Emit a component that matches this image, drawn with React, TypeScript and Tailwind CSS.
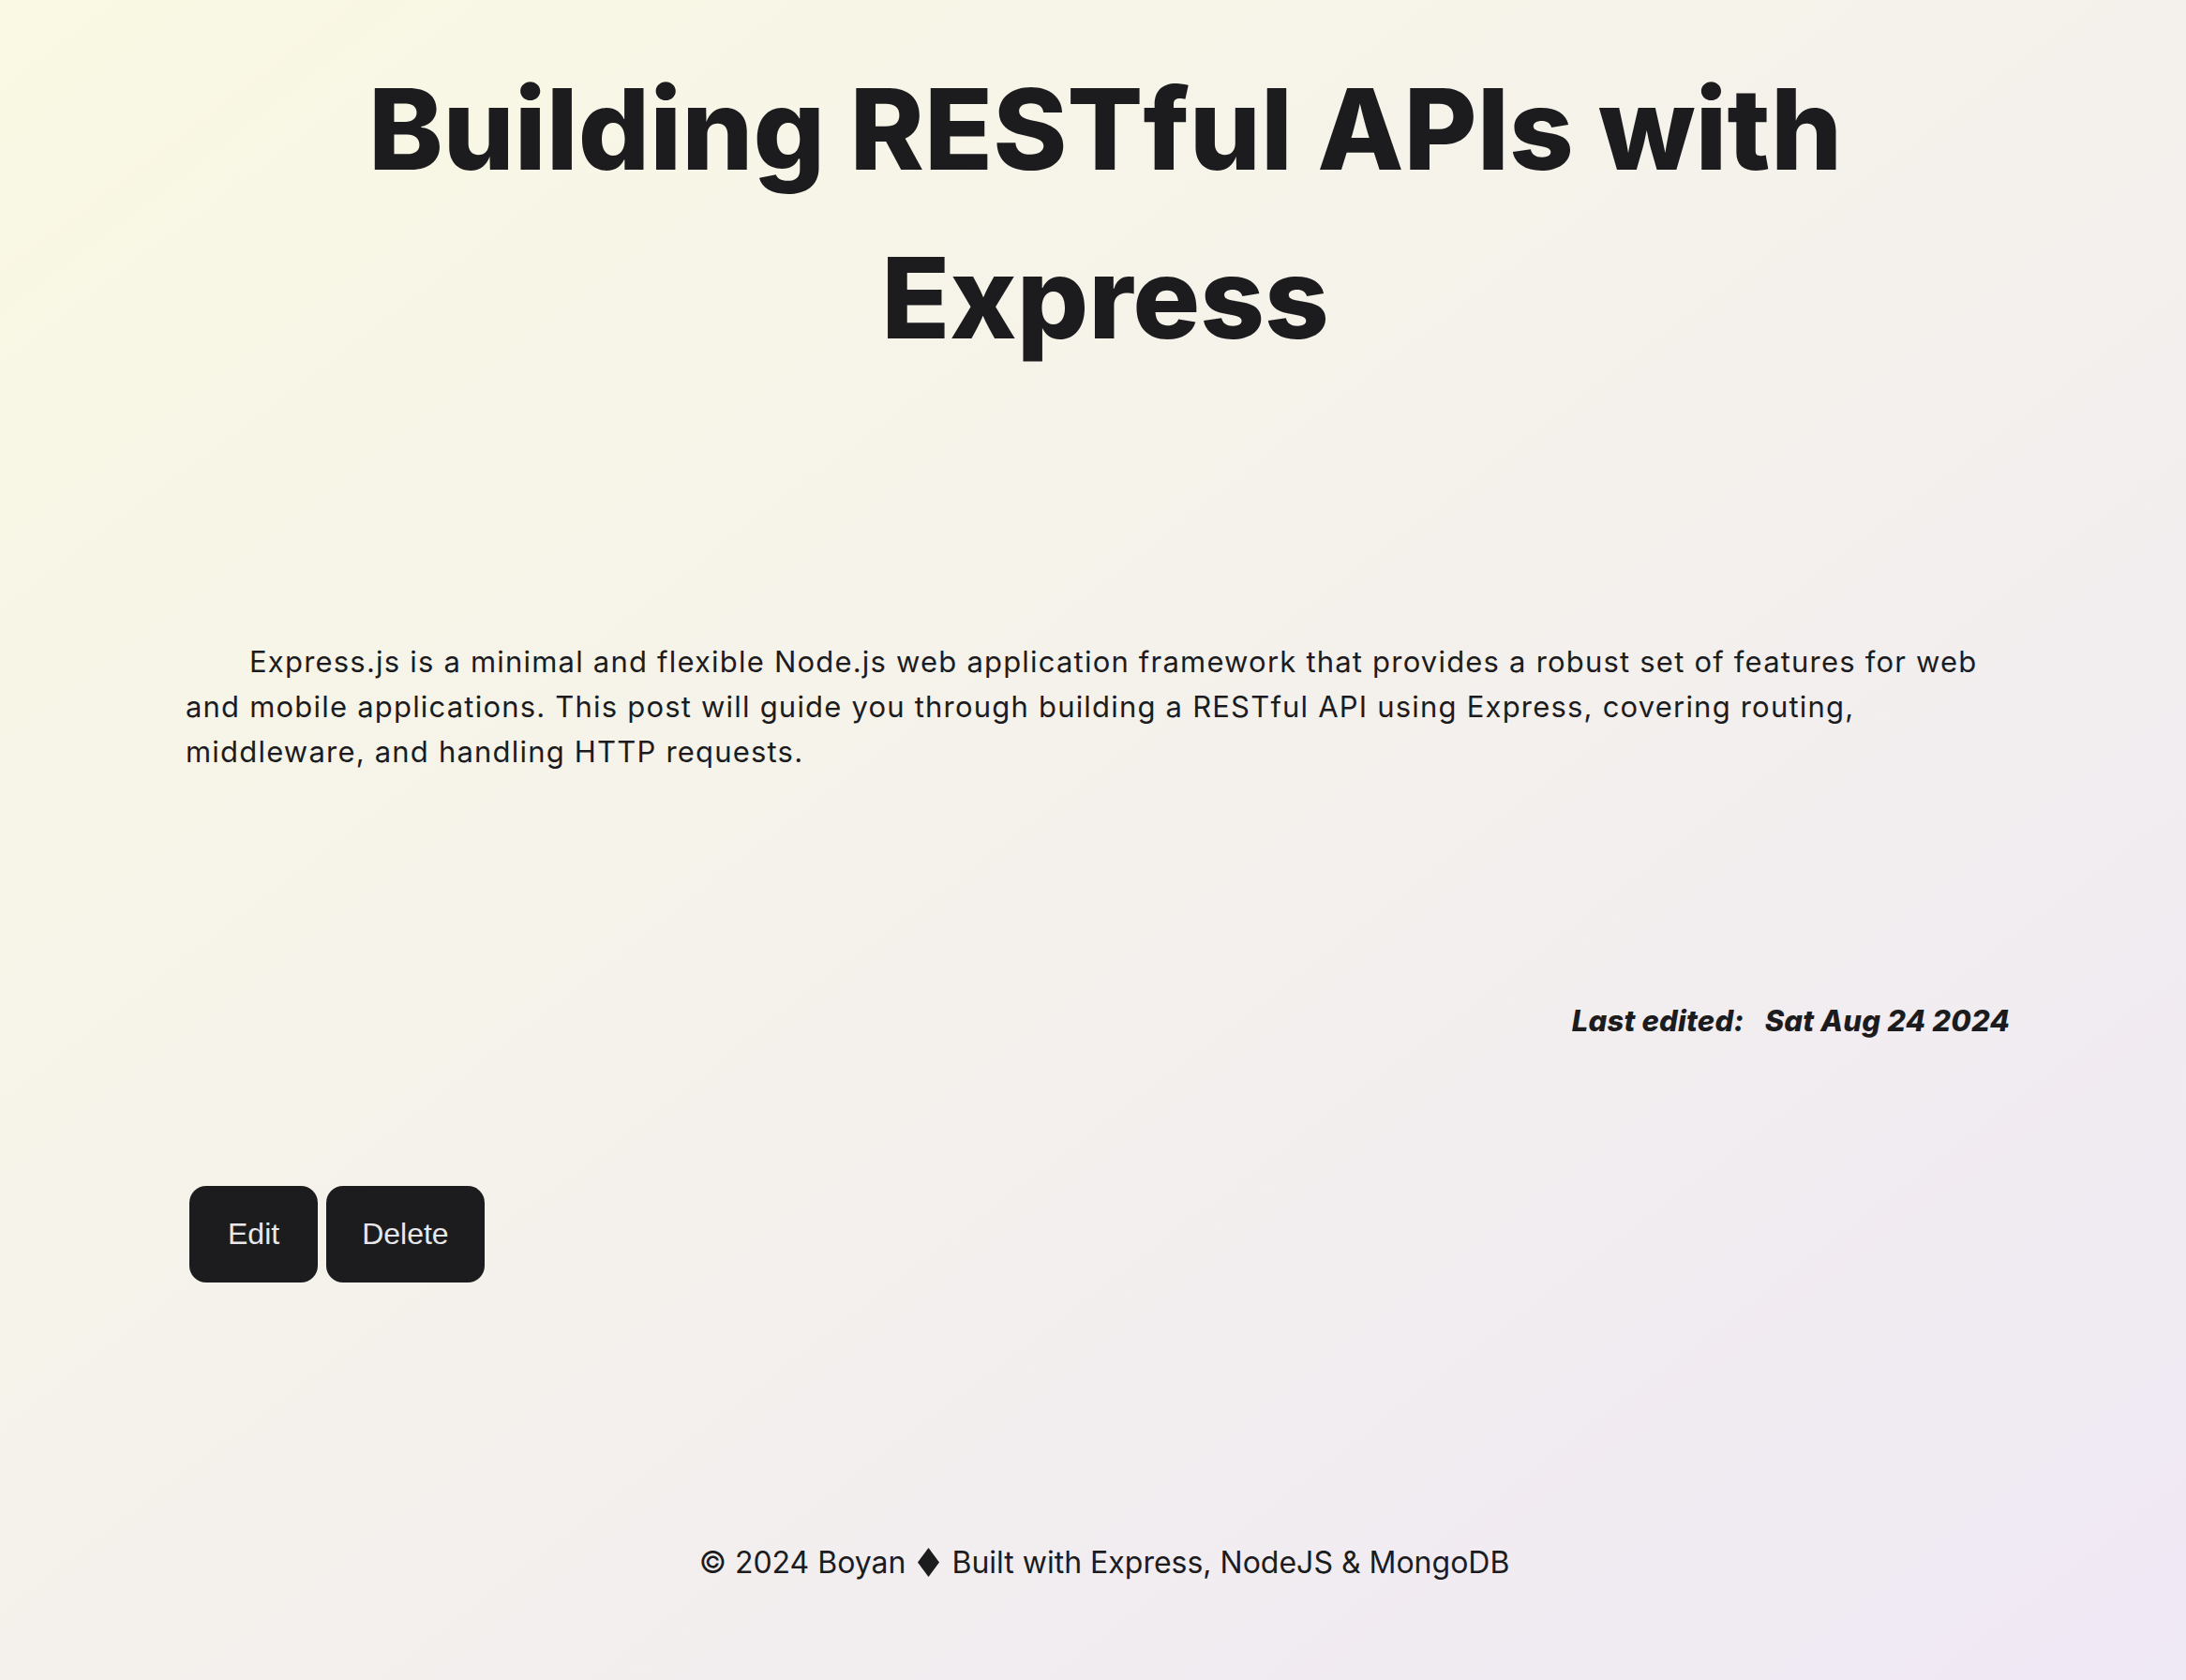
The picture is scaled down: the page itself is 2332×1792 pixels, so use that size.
const post = {
  title: 'Building RESTful APIs with Express',
  body:
    'Express.js is a minimal and flexible Node.js web application framework that provides a robust set of features for web and mobile applications. This post will guide you through building a RESTful API using Express, covering routing, middleware, and handling HTTP requests.',
  updatedAt: 'Sat Aug 24 2024',
};

const App = () => {
  return (
    <div
      className="min-h-screen bg-[linear-gradient(to_bottom_right,#faf9e3,#f4f1ec_50%,#efe8f5)] text-[#1c1c1e]"
      style={{ fontFamily: 'Inter, "Noto Sans", sans-serif' }}
    >
      <main className="ml-[198px] w-[1946px] pt-[48px]">
        <h1 className="mx-auto max-w-[1700px] pl-[16px] text-center text-[120px] font-extrabold leading-[180px]">
          {post.title}
        </h1>

        <p className="mt-[274px] indent-[68px] text-[31px] leading-[48px] tracking-[1.2px]">{post.body}</p>

        <p className="mt-[240px] text-right text-[31px] font-extrabold italic tracking-[0.2px]">
          Last edited:<span className="ml-[22px]">{post.updatedAt}</span>
        </p>

        <div className="mt-[152px] flex gap-[9px] pl-[4px]">
          <button
            className="h-[103px] rounded-[18px] bg-[#1c1c1e] px-[41px] text-[32px] text-[#e8e8ec]"
            style={{ fontFamily: '"Liberation Sans", Arial, sans-serif' }}
          >
            Edit
          </button>
          <button
            className="h-[103px] rounded-[18px] bg-[#1c1c1e] px-[38px] text-[32px] text-[#e8e8ec]"
            style={{ fontFamily: '"Liberation Sans", Arial, sans-serif' }}
          >
            Delete
          </button>
        </div>
      </main>

      <footer className="pt-[275px] pb-[90px] pl-[24px] text-center text-[32px]">
        © 2024 Boyan{' '}
        <svg viewBox="0 0 23 31" className="mx-[4px] inline-block h-[31px] w-[23px] align-[-4px]" fill="currentColor">
          <path d="M11.5 0 23 15.5 11.5 31 0 15.5Z" />
        </svg>{' '}
        Built with Express, NodeJS &amp; MongoDB
      </footer>
    </div>
  );
};

export default App;
